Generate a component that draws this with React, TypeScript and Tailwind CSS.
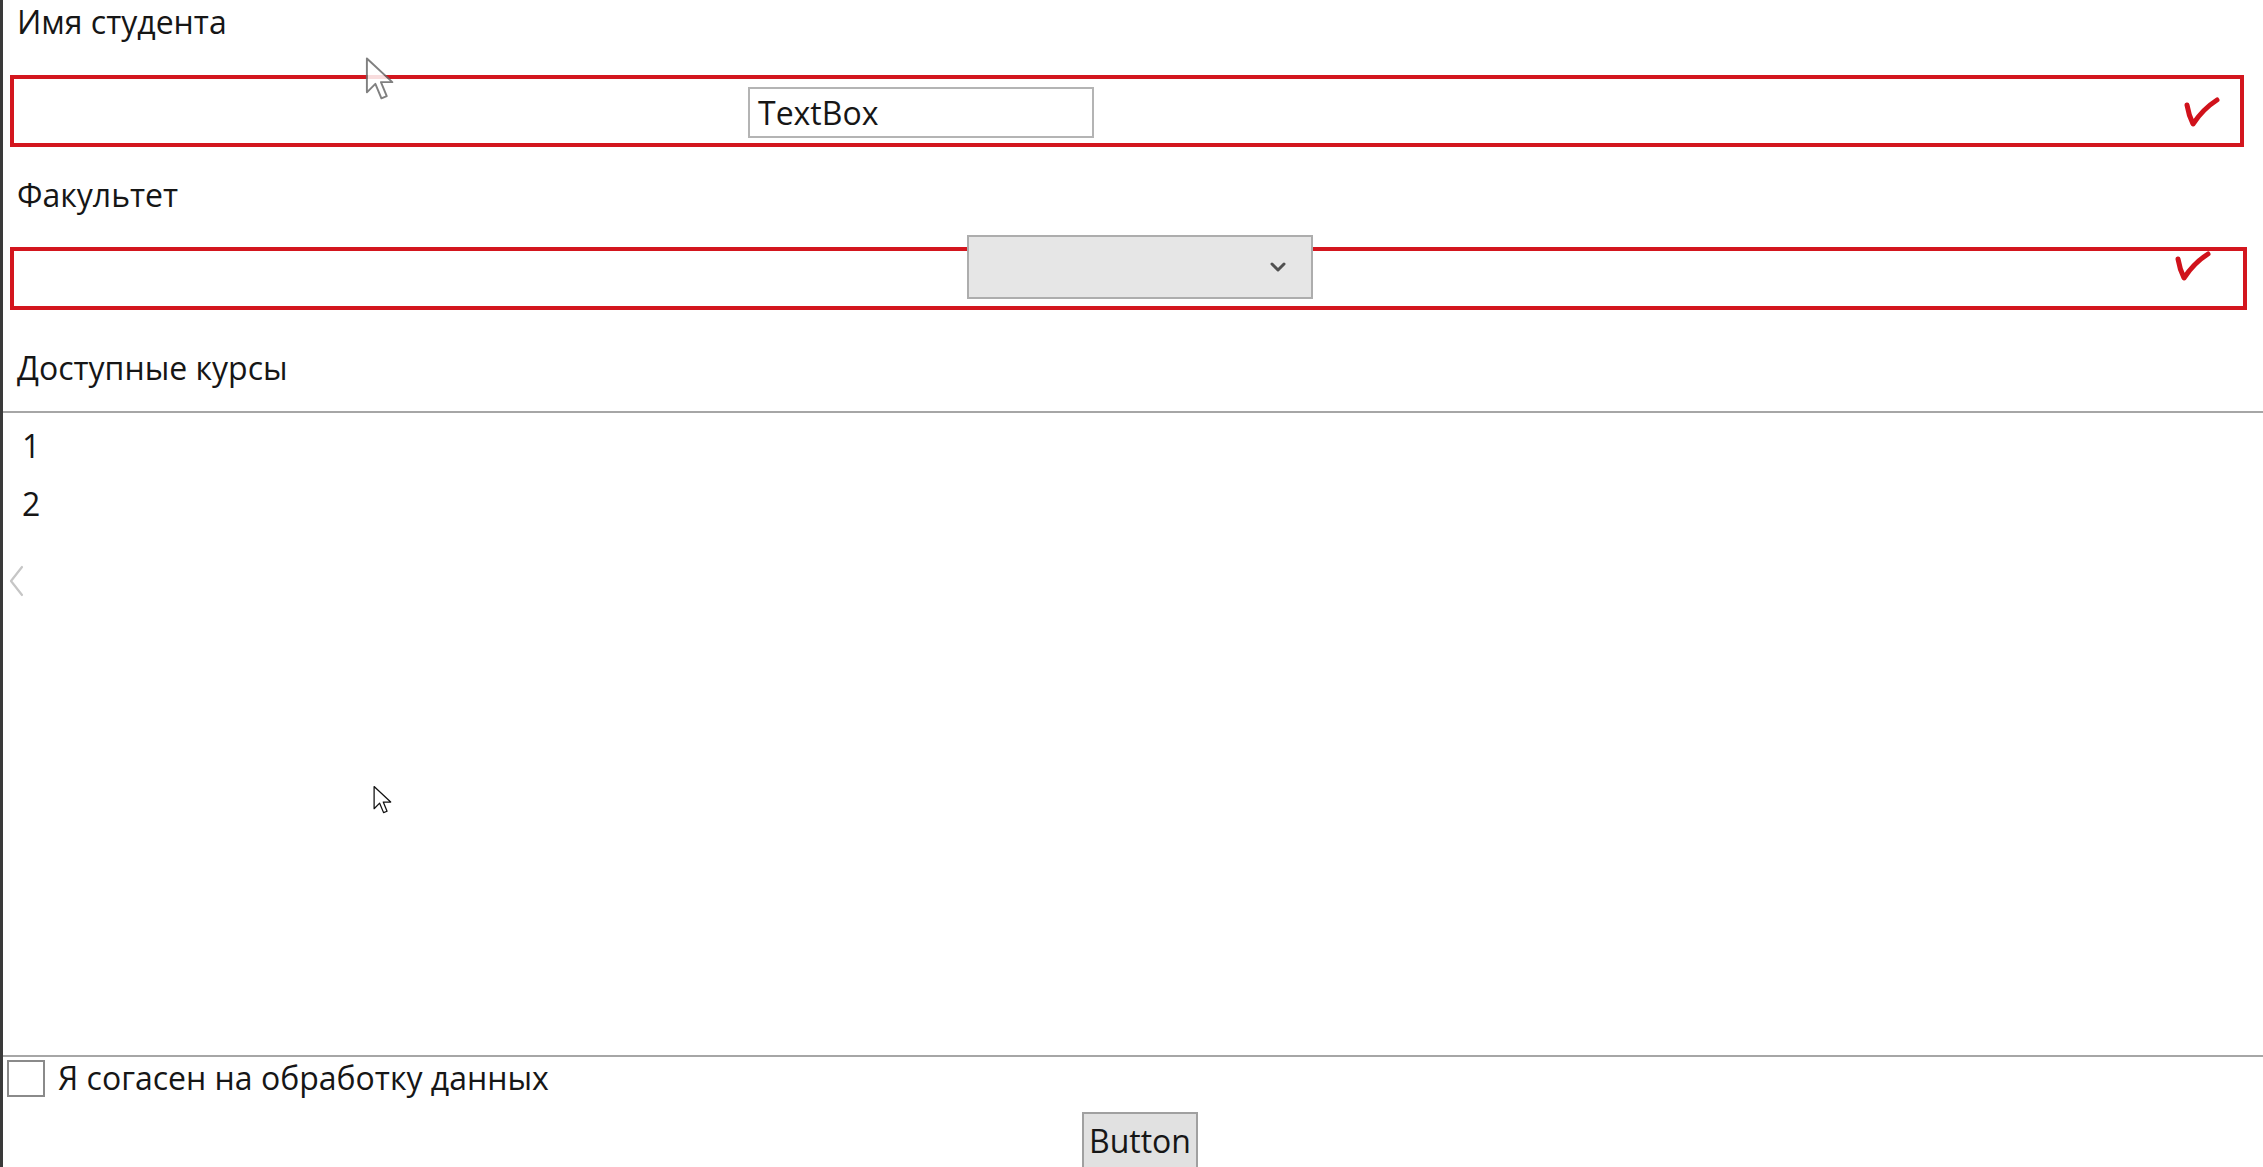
import React from "react";

function RedCheck({ className = "" }: { className?: string }) {
    return (
        <svg className={className} width="36" height="32" viewBox="0 0 36 32" fill="none">
            <path
                d="M3 9 C4 15, 6 22, 9 28 C15 19, 22 11, 33 4"
                stroke="#d0121b"
                strokeWidth="5"
                strokeLinecap="round"
                strokeLinejoin="round"
            />
        </svg>
    );
}

function Cursor({ className = "", faded = false }: { className?: string; faded?: boolean }) {
    return (
        <svg className={className} viewBox="0 0 12 19" fill="none">
            <path
                d="M1 1 L1 15 L4.5 11.5 L7 17.5 L9.2 16.6 L6.8 10.8 L11.5 10.8 Z"
                fill="white"
                stroke={faded ? "#6b6b6b" : "#111"}
                strokeWidth="0.8"
                strokeLinejoin="round"
                opacity={faded ? 0.85 : 1}
            />
        </svg>
    );
}

export default function App() {
    return (
        <div
            className="relative h-[1167px] w-full overflow-hidden bg-white border-l-[3px] border-[#3a3a3a] text-[#161616]"
            style={{ fontFamily: '"Open Sans", "Noto Sans", sans-serif' }}
        >
            {/* Имя студента */}
            <div className="h-[44px] pl-[14px] flex items-center text-[32px]">Имя студента</div>
            <div className="mt-[31px] ml-[7px] mr-[19px] h-[72px] border-[4px] border-[#d3161e] flex items-center">
                <div className="ml-[734px] mt-[3px] w-[346px] h-[51px] border-2 border-[#b4b4b4] bg-white flex items-center pl-[8px] text-[32px]">
                    TextBox
                </div>
                <RedCheck className="ml-auto mr-[20px] mt-[2px]" />
            </div>

            {/* Факультет */}
            <div className="mt-[26px] h-[44px] pl-[14px] flex items-center text-[32px]">Факультет</div>
            <div className="mt-[30px] ml-[7px] mr-[16px] h-[63px] border-[4px] border-[#d3161e] flex items-start">
                <div className="ml-[953px] mt-[-16px] w-[346px] h-[64px] border-2 border-[#adadad] bg-[#e6e6e6] flex items-center justify-end pr-[24px]">
                    <svg width="18" height="12" viewBox="0 0 18 12" fill="none">
                        <path d="M3 3 L9 9 L15 3" stroke="#505050" strokeWidth="3" strokeLinecap="round" strokeLinejoin="round" />
                    </svg>
                </div>
                <RedCheck className="ml-auto mr-[32px] mt-[-1px]" />
            </div>

            {/* Доступные курсы */}
            <div className="mt-[36px] h-[44px] pl-[14px] flex items-center text-[32px]">Доступные курсы</div>
            <div className="relative mt-[21px] h-[646px] border-t-2 border-b-2 border-[#a6a6a6] pt-[4px]">
                <div className="h-[58px] pl-[19px] flex items-center text-[32px]">1</div>
                <div className="h-[58px] pl-[19px] flex items-center text-[32px]">2</div>
                <svg className="absolute left-[5px] top-[152px]" width="16" height="32" viewBox="0 0 16 32" fill="none">
                    <path d="M14 2 L3 16 L14 30" stroke="#c6c6c6" strokeWidth="2.2" strokeLinecap="round" strokeLinejoin="round" />
                </svg>
            </div>

            {/* согласие */}
            <div className="h-[42px] flex items-center">
                <div className="ml-[4px] w-[38px] h-[37px] border-2 border-[#8a8a8a] bg-white" />
                <span className="ml-[13px] text-[32px]">Я согасен на обработку данных</span>
            </div>

            <div className="mt-[13px] ml-[1079px] w-[116px] h-[58px] border-2 border-[#a0a0a0] bg-[#e1e1e1] flex items-center justify-center text-[32px]">
                Button
            </div>

            {/* курсоры */}
            <Cursor className="absolute left-[361px] top-[56px] w-[30px] h-[46px]" faded />
            <Cursor className="absolute left-[369px] top-[785px] w-[20px] h-[30px]" />
        </div>
    );
}
